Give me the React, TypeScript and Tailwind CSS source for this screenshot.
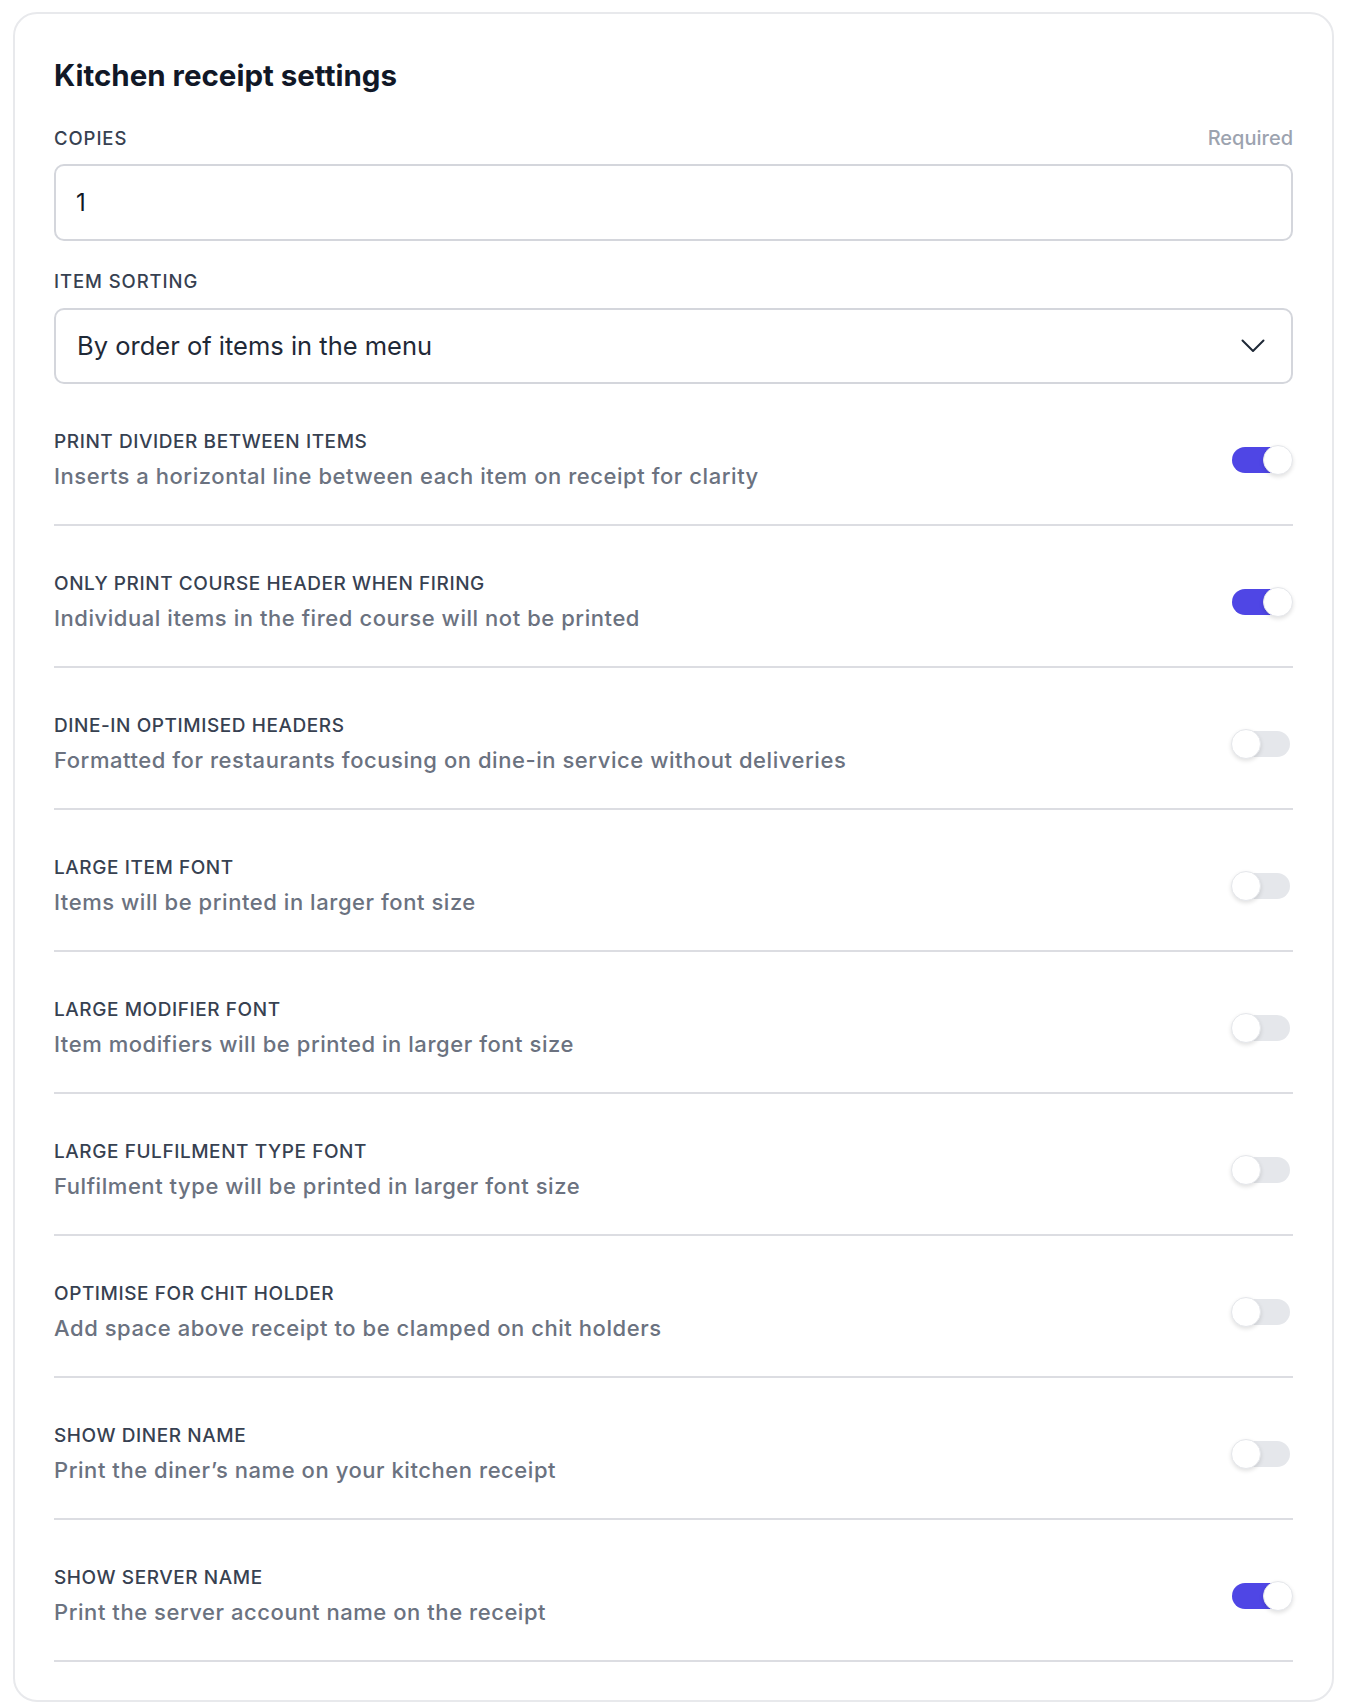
import { useState } from 'react';

interface Setting {
    id: string;
    label: string;
    description: string;
    enabled: boolean;
}

const initialSettings: Setting[] = [
    { id: 'divider', label: 'Print divider between items', description: 'Inserts a horizontal line between each item on receipt for clarity', enabled: true },
    { id: 'course', label: 'Only print course header when firing', description: 'Individual items in the fired course will not be printed', enabled: true },
    { id: 'dinein', label: 'Dine-in optimised headers', description: 'Formatted for restaurants focusing on dine-in service without deliveries', enabled: false },
    { id: 'itemfont', label: 'Large item font', description: 'Items will be printed in larger font size', enabled: false },
    { id: 'modfont', label: 'Large modifier font', description: 'Item modifiers will be printed in larger font size', enabled: false },
    { id: 'fulfilfont', label: 'Large fulfilment type font', description: 'Fulfilment type will be printed in larger font size', enabled: false },
    { id: 'chit', label: 'Optimise for chit holder', description: 'Add space above receipt to be clamped on chit holders', enabled: false },
    { id: 'diner', label: 'Show diner name', description: 'Print the diner\u2019s name on your kitchen receipt', enabled: false },
    { id: 'server', label: 'Show server name', description: 'Print the server account name on the receipt', enabled: true },
];

function Toggle({ on, onClick }: { on: boolean; onClick: () => void }) {
    return (
        <button
            type="button"
            onClick={onClick}
            className={`relative mr-[3px] h-[26px] w-[58px] shrink-0 rounded-full transition ${on ? 'bg-[#4f46e5]' : 'bg-[#e5e7eb]'}`}
        >
            <span
                className={`absolute top-[-2px] h-[30px] w-[30px] rounded-full border border-[#e5e7eb] bg-white shadow-[0_2px_4px_rgba(0,0,0,0.12)] transition ${
                    on ? 'left-[31px]' : 'left-[-1px]'
                }`}
            />
        </button>
    );
}

export default function App() {
    const [settings, setSettings] = useState<Setting[]>(initialSettings);
    const [copies, setCopies] = useState('1');

    const toggle = (id: string) =>
        setSettings(settings.map((s) => (s.id === id ? { ...s, enabled: !s.enabled } : s)));

    return (
        <div className="min-h-screen bg-white pl-[13px] pr-[16px] pt-[12px] pb-[6px] font-['Inter',sans-serif]">
            <div className="rounded-[24px] border-2 border-[#e8e9ec] bg-white pl-[39px] pr-[39px] pt-[43px] pb-[38px]">
                <h2 className="text-[29.5px] leading-[36px] font-bold text-[#111827]">Kitchen receipt settings</h2>

                {/* copies */}
                <div className="mt-[33px] flex items-center justify-between">
                    <label className="text-[18.5px] leading-[24px] font-medium uppercase tracking-[0.05em] text-[#374151]">
                        Copies
                    </label>
                    <span className="text-[20px] leading-[24px] font-medium text-[#9ca3af]">Required</span>
                </div>
                <input
                    type="text"
                    value={copies}
                    onChange={(e) => setCopies(e.target.value)}
                    className="mt-[14px] block h-[77px] w-full rounded-[10px] border-2 border-[#d4d6dc] px-[20px] text-[24px] text-[#111827] outline-none"
                />

                {/* item sorting */}
                <label className="mt-[28px] block text-[18.5px] leading-[24px] font-medium uppercase tracking-[0.05em] text-[#374151]">
                    Item sorting
                </label>
                <div className="mt-[15px] flex h-[76px] items-center justify-between rounded-[10px] border-2 border-[#d4d6dc] pl-[21px] pr-[26px]">
                    <span className="text-[25.5px] text-[#1f2937]">By order of items in the menu</span>
                    <svg width="24" height="14" viewBox="0 0 24 14" fill="none">
                        <path d="M1.5 1.5 12 12 22.5 1.5" stroke="#1f2937" strokeWidth="2" strokeLinecap="round" strokeLinejoin="round" />
                    </svg>
                </div>

                {/* toggles */}
                <div>
                    {settings.map((s) => (
                        <div
                            key={s.id}
                            className="flex items-center justify-between border-b-2 border-[#dcdde2] pt-[46px] pb-[34px]"
                        >
                            <div>
                                <p className="text-[19px] leading-[24px] font-medium uppercase tracking-[0.03em] text-[#374151]">
                                    {s.label}
                                </p>
                                <p className="mt-[8px] text-[22px] leading-[28px] font-medium tracking-[0.025em] text-[#6b7280]">
                                    {s.description}
                                </p>
                            </div>
                            <Toggle on={s.enabled} onClick={() => toggle(s.id)} />
                        </div>
                    ))}
                </div>
            </div>
        </div>
    );
}
